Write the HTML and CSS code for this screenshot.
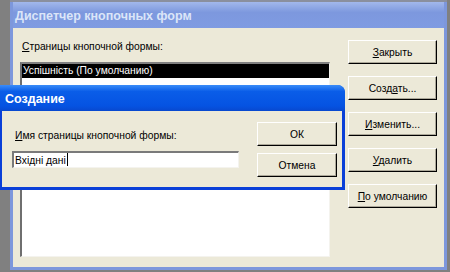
FILE: index.html
```html
<!DOCTYPE html>
<html lang="ru">
<head>
    <meta charset="UTF-8">
    <title>Диспетчер кнопочных форм</title>
    <link rel="stylesheet" href="styles.css">
</head>
<body>
    <div class="screen">
        <div class="window">
            <div class="window-title">Диспетчер кнопочных форм</div>
            <div class="window-body">
                <div class="pages">
                    <div class="field-label"><u>С</u>траницы кнопочной формы:</div>
                    <div class="listbox">
                        <div class="list-item selected">Успішність (По умолчанию)</div>
                    </div>
                </div>
                <div class="actions">
                    <button class="btn"><u>З</u>акрыть</button>
                    <button class="btn">Созд<u>а</u>ть...</button>
                    <button class="btn"><u>И</u>зменить...</button>
                    <button class="btn"><u>У</u>далить</button>
                    <button class="btn"><u>П</u>о умолчанию</button>
                </div>
            </div>
        </div>

        <!-- диалог поверх основного окна -->
        <div class="dialog">
            <div class="dialog-title">Создание</div>
            <div class="dialog-body">
                <div class="dialog-form">
                    <div class="field-label"><u>И</u>мя страницы кнопочной формы:</div>
                    <div class="textbox">Вхідні дані<span class="caret"></span></div>
                </div>
                <div class="dialog-actions">
                    <button class="btn">ОК</button>
                    <button class="btn">Отмена</button>
                </div>
            </div>
        </div>
    </div>
</body>
</html>
```

FILE: styles.css
```css
body {
    margin: 0;
    font-family: "Liberation Sans", sans-serif;
    font-size: 10.3px;
    background-color: #808080;
}
.screen {
    position: relative;
    width: 450px;
    height: 272px;
    overflow: hidden;
}
.window {
    margin-left: 10px;
    width: 437px;
    height: 270px;
    display: flex;
    flex-direction: column;
    background-color: #7d97dc;
    border-top: 2px solid #8a8f9e;
    padding: 0 3px 3px 3px;
    box-sizing: border-box;
}
.window-title {
    height: 26px;
    line-height: 28px;
    padding-left: 2px;
    font-weight: bold;
    font-size: 12.5px;
    color: #dbe5f8;
    background: linear-gradient(to bottom, #a2b8ec, #7d98de 40%, #7f9be2);
}
.window-body {
    flex: 1;
    display: flex;
    gap: 18px;
    background-color: #ece9d8;
    padding: 12px 7px 10px 7px;
}
.pages {
    width: 310px;
    display: flex;
    flex-direction: column;
}
.field-label {
    color: #000;
    height: 14px;
    line-height: 14px;
    margin-bottom: 8px;
    padding-left: 2px;
}
.listbox {
    flex: 1;
    background-color: #fff;
    border-top: 2px solid #808080;
    border-left: 2px solid #6f6f6f;
    border-right: 1px solid #f4f3ee;
    border-bottom: 1px solid #f4f3ee;
}
.list-item {
    height: 14px;
    line-height: 14px;
    padding-left: 1px;
}
.list-item.selected {
    background-color: #000;
    color: #fff;
}
.actions {
    display: flex;
    flex-direction: column;
    gap: 12px;
}
.btn {
    width: 89px;
    height: 24px;
    padding: 0;
    font-family: "Liberation Sans", sans-serif;
    font-size: 10.3px;
    color: #000;
    background-color: #ece9d8;
    border: 1px solid;
    border-color: #fff #000 #000 #fff;
    box-shadow: inset -1px -1px 0 #aca899;
}
.dialog {
    position: absolute;
    left: -1px;
    top: 85px;
    width: 346px;
    height: 105px;
    display: flex;
    flex-direction: column;
    background-color: #0a3fd8;
    border-radius: 0 8px 0 0;
    padding: 0 3px 3px 3px;
    box-sizing: border-box;
}
.dialog-title {
    height: 26px;
    line-height: 28px;
    font-weight: bold;
    font-size: 12.5px;
    color: #fff;
    background: linear-gradient(to bottom, #3a8cf8, #0a5de8 25%, #0553e2 80%, #0848cf);
    border-radius: 0 7px 0 0;
    margin: 0 -3px;
    padding-left: 6px;
}
.dialog-body {
    flex: 1;
    display: flex;
    background-color: #ece9d8;
    padding: 11px 0 0 10px;
}
.dialog-form {
    width: 227px;
    padding-top: 7px;
}
.dialog-form .field-label {
    padding-left: 3px;
    margin-bottom: 8px;
}
.textbox {
    height: 17px;
    box-sizing: border-box;
    line-height: 14px;
    background-color: #fff;
    border-top: 2px solid #7a7a7a;
    border-left: 2px solid #7a7a7a;
    border-right: 1px solid #f4f3ee;
    border-bottom: 1px solid #f4f3ee;
    padding-left: 1px;
}
.caret {
    display: inline-block;
    width: 1px;
    height: 13px;
    vertical-align: -2px;
    background-color: #000;
    margin-left: 1px;
}
.dialog-actions {
    margin-left: 18px;
    display: flex;
    flex-direction: column;
    gap: 7px;
}
.dialog-actions .btn {
    width: 80px;
}
```
